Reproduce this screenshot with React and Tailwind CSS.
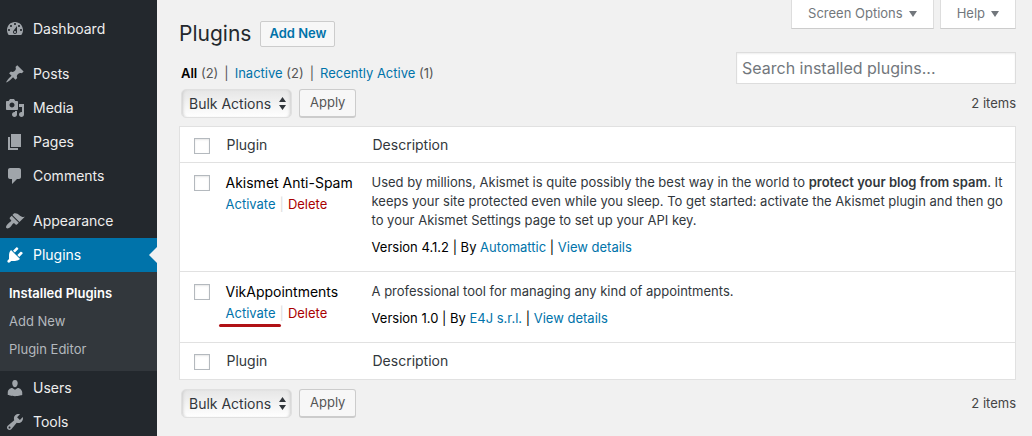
import React, { useState } from "react";
import clsx from "clsx";

const ICONS = {
  dashboard:
    "M3.76 16h12.48c1.1-1.37 1.76-3.11 1.76-5 0-4.42-3.58-8-8-8s-8 3.58-8 8c0 1.89.66 3.63 1.76 5zM10 4c.55 0 1 .45 1 1s-.45 1-1 1-1-.45-1-1 .45-1 1-1zM6 6c.55 0 1 .45 1 1s-.45 1-1 1-1-.45-1-1 .45-1 1-1zm8 0c.55 0 1 .45 1 1s-.45 1-1 1-1-.45-1-1 .45-1 1-1zm-5.37 5.55L12 7v6c0 1.1-.9 2-2 2s-2-.9-2-2c0-.57.24-1.08.63-1.45zM4 10c.55 0 1 .45 1 1s-.45 1-1 1-1-.45-1-1 .45-1 1-1zm12 0c.55 0 1 .45 1 1s-.45 1-1 1-1-.45-1-1 .45-1 1-1zm-5 3c0-.55-.45-1-1-1s-1 .45-1 1 .45 1 1 1 1-.45 1-1z",
  posts:
    "M10.44 3.02l1.82-1.82 6.36 6.35-1.83 1.82c-1.05-.68-2.48-.57-3.41.36l-.75.75c-.92.93-1.04 2.35-.35 3.41l-1.83 1.82-2.41-2.41-2.8 2.79c-.42.42-3.38 2.71-3.8 2.29s1.86-3.39 2.28-3.81l2.79-2.79L4.1 9.36l1.83-1.82c1.05.69 2.48.57 3.4-.36l.75-.75c.93-.92 1.05-2.35.36-3.41z",
  media:
    "M13 11V4c0-.55-.45-1-1-1h-1.67L9 1H5L3.67 3H2c-.55 0-1 .45-1 1v7c0 .55.45 1 1 1h10c.55 0 1-.45 1-1zM7 4.5c1.38 0 2.5 1.12 2.5 2.5S8.38 9.5 7 9.5 4.5 8.38 4.5 7 5.62 4.5 7 4.5zM14 6h5v10.5c0 1.38-1.12 2.5-2.5 2.5S14 17.88 14 16.5s1.12-2.5 2.5-2.5c.17 0 .34.02.5.05V9h-3V6zm-4 8.05V13h2v3.5c0 1.38-1.12 2.5-2.5 2.5S7 17.88 7 16.5 8.12 14 9.5 14c.17 0 .34.02.5.05z",
  pages: "M6 15V2h10v13H6zm-1 1h8v2H3V5h2v11z",
  comments:
    "M5 2h9c1.1 0 2 .9 2 2v7c0 1.1-.9 2-2 2h-2l-5 5v-5H5c-1.1 0-2-.9-2-2V4c0-1.1.9-2 2-2z",
  appearance:
    "M14.48 11.06L7.41 3.99l1.5-1.5c.5-.56 2.3-.47 3.51.32 1.21.8 1.43 1.28 2.91 2.1 1.18.64 2.45 1.26 4.45.85zm-.71.71L6.7 4.7 4.93 6.47c-.39.39-.39 1.02 0 1.41l1.06 1.06c.39.39.39 1.03 0 1.42-.6.6-1.43 1.11-2.21 1.69-.35.26-.7.53-1.01.84C1.43 14.23.4 16.08 1.4 17.07c.99 1 2.84-.03 4.18-1.36.31-.31.58-.66.85-1.02.57-.78 1.08-1.61 1.69-2.21.39-.39 1.02-.39 1.41 0l1.06 1.06c.39.39 1.02.39 1.41 0z",
  plugins:
    "M13.11 4.36L9.87 7.6 8 5.73l3.24-3.24c.35-.34 1.05-.2 1.56.32.52.51.66 1.21.31 1.55zm-8 1.77l.91-1.12 9.01 9.01-1.19.84c-.71.71-2.63 1.16-3.82 1.16H6.14L4.9 17.26c-.59.59-1.54.59-2.12 0-.59-.58-.59-1.53 0-2.12l1.24-1.24v-3.88c0-1.13.4-3.19 1.09-3.89zm7.26 3.97l3.24-3.24c.34-.35 1.04-.21 1.55.31.52.51.66 1.21.31 1.55l-3.24 3.25z",
  users:
    "M10 9.25c-2.27 0-2.73-3.44-2.73-3.44C7 4.02 7.82 2 9.97 2c2.16 0 2.98 2.02 2.71 3.81 0 0-.41 3.44-2.68 3.44zm0 2.57L12.72 10c2.39 0 4.52 2.33 4.52 4.53v2.49s-3.65 1.13-7.24 1.13c-3.65 0-7.24-1.13-7.24-1.13v-2.49c0-2.25 1.94-4.48 4.47-4.48z",
  tools:
    "M16.68 9.77c-1.34 1.34-3.3 1.67-4.95.99l-5.41 6.52c-.99.99-2.59.99-3.58 0s-.99-2.59 0-3.57l6.52-5.42c-.68-1.65-.35-3.61.99-4.95 1.28-1.28 3.12-1.62 4.72-1.06l-2.89 2.89 2.82 2.82 2.86-2.87c.53 1.58.18 3.39-1.08 4.65zM3.81 16.21c.4.39 1.04.39 1.43 0 .4-.4.4-1.04 0-1.43-.39-.4-1.03-.4-1.43 0-.39.39-.39 1.03 0 1.43z",
};

const MenuItem = ({ icon, label, active }) => (
  <a
    href="#"
    className={clsx(
      "relative flex h-[34px] items-center gap-2 pl-[5px] text-sm",
      active ? "bg-[#0073aa] text-white" : "text-[#eee]"
    )}
  >
    <svg
      viewBox="0 0 20 20"
      className={clsx("size-5", active ? "fill-white" : "fill-[#a0a5aa]")}
      aria-hidden="true"
    >
      <path d={ICONS[icon]} fillRule="evenodd" />
    </svg>
    {label}
    {active && (
      <span className="absolute top-1/2 right-0 -translate-y-1/2 border-y-8 border-r-8 border-y-transparent border-r-[#f1f1f1]" />
    )}
  </a>
);

const Sidebar = () => (
  <nav className="w-[157px] shrink-0 bg-[#23282d] pt-3">
    <MenuItem icon="dashboard" label="Dashboard" />
    <div className="mt-[11px]">
      <MenuItem icon="posts" label="Posts" />
      <MenuItem icon="media" label="Media" />
      <MenuItem icon="pages" label="Pages" />
      <MenuItem icon="comments" label="Comments" />
    </div>
    <div className="mt-[11px]">
      <MenuItem icon="appearance" label="Appearance" />
      <MenuItem icon="plugins" label="Plugins" active />
      <div className="flex flex-col bg-[#32373c] pt-[7px] pb-2 pl-[9px] text-[13px] leading-7 text-[#b4b9be]">
        <a href="#" className="font-semibold text-white">
          Installed Plugins
        </a>
        <a href="#">Add New</a>
        <a href="#">Plugin Editor</a>
      </div>
      <MenuItem icon="users" label="Users" />
      <MenuItem icon="tools" label="Tools" />
    </div>
  </nav>
);

const MetaTab = ({ label }) => (
  <button className="flex h-[29px] items-center gap-[6px] border border-t-0 border-[#ddd] border-b-[#ccc] bg-white px-4 text-[13px] text-[#72777c]">
    {label}
    <svg viewBox="0 0 8 6" className="h-[6px] w-2 fill-current" aria-hidden="true">
      <path d="M0 0h8L4 6z" />
    </svg>
  </button>
);

const BulkActions = () => (
  <div className="flex items-center justify-between pl-[2px]">
    <div className="flex gap-[7px]">
      <div className="relative">
        <select
          aria-label="Select bulk action"
          className="h-[29px] w-[111px] appearance-none rounded-[5px] border border-[#e0e0e0] bg-linear-to-b from-[#e6e6e6] to-white pl-[7px] text-sm text-[#32373c] shadow-[inset_3px_0_3px_-2px_#ccc,inset_-3px_0_3px_-2px_#ccc]"
        >
          <option>Bulk Actions</option>
          <option>Activate</option>
          <option>Delete</option>
        </select>
        <svg
          viewBox="0 0 7 13"
          className="pointer-events-none absolute top-2 right-[6px] h-[13px] w-[7px] fill-[#32373c]"
          aria-hidden="true"
        >
          <path d="M3.500 0L7 5H0zM3.500 13L0 8h7z" />
        </svg>
      </div>
      <button className="h-[29px] rounded-[3px] border border-b-2 border-[#ccc] bg-[#f7f7f7] px-[10px] text-[13px] text-[#555]">
        Apply
      </button>
    </div>
    <span className="text-[13px] text-[#444]">2 items</span>
  </div>
);

const Checkbox = ({ label }) => (
  <input
    type="checkbox"
    aria-label={label}
    className="block size-4 appearance-none border border-[#b4b9be] bg-white shadow-[inset_0_1px_2px_rgba(0,0,0,0.1)] checked:bg-[#0073aa]"
  />
);

const HeadRow = ({ label }) => (
  <tr className="text-left text-sm text-[#32373c]">
    <td className="pt-[2px] pl-[14px]">
      <Checkbox label={label} />
    </td>
    <th className="pl-[10px] font-normal">Plugin</th>
    <th className="pl-[10px] font-normal">Description</th>
  </tr>
);

const Link = ({ children }) => (
  <a href="#" className="text-[#0073aa]">
    {children}
  </a>
);

const PluginRow = ({ name, version, author, marked, children }) => (
  <tr className="border-t border-[#e1e1e1] align-top">
    <td className="pt-3 pl-[14px]">
      <Checkbox label={`Select ${name}`} />
    </td>
    <td className="pt-[10px] pl-[9px]">
      <div className="text-sm leading-5 text-black">{name}</div>
      <div className="relative flex h-6 items-center text-[13px]">
        <Link>Activate</Link>
        <span className="px-1 text-[#ddd]">|</span>
        <a href="#" className="text-[#a00]">
          Delete
        </a>
        {marked && (
          <span className="absolute top-[22px] -left-[7px] h-[3px] w-[62px] rounded-full bg-[#b01116]" />
        )}
      </div>
    </td>
    <td className="pt-[10px] pr-2 pb-[14px] pl-[9px] text-[13px] leading-[19px]">
      <p className="text-[#32373c]">{children}</p>
      <p className="mt-2 text-black">
        Version {version} | By <Link>{author}</Link> | <Link>View details</Link>
      </p>
    </td>
  </tr>
);

const App = () => {
  const [search, setSearch] = useState("");

  return (
    <div className="flex h-screen overflow-hidden bg-[#f1f1f1] font-['Inter',sans-serif]">
      <Sidebar />
      <main className="min-w-0 flex-1 pr-4 pl-[22px]">
        <div className="flex justify-between">
          <div className="pt-[21px]">
            <div className="flex h-[26px] items-center gap-[9px]">
              <h1 className="text-[21px] text-[#23282d]">Plugins</h1>
              <button className="h-[26px] rounded-[2px] border border-[#ccc] bg-[#f7f7f7] px-2 text-[13px] font-semibold text-[#0073aa]">
                Add New
              </button>
            </div>
            <div className="mt-4 flex gap-[6px] pl-[2px] text-[13px] leading-5 text-[#555]">
              <span>
                <a href="#" className="font-semibold text-black">
                  All
                </a>{" "}
                (2)
              </span>
              <span>|</span>
              <span>
                <Link>Inactive</Link> (2)
              </span>
              <span>|</span>
              <span>
                <Link>Recently Active</Link> (1)
              </span>
            </div>
          </div>
          <div className="flex flex-col items-end gap-[23px]">
            <div className="flex gap-[6px]">
              <MetaTab label="Screen Options" />
              <MetaTab label="Help" />
            </div>
            <input
              type="search"
              aria-label="Search installed plugins"
              placeholder="Search installed plugins..."
              value={search}
              onChange={(e) => setSearch(e.target.value)}
              className="h-8 w-[280px] border border-[#ddd] bg-white px-[5px] text-base text-[#32373c] shadow-[inset_0_1px_2px_rgba(0,0,0,0.07)] placeholder:text-[#72777c]"
            />
          </div>
        </div>

        <div className="mt-[5px]">
          <BulkActions />
        </div>

        <table className="mt-2 mb-[9px] w-full table-fixed border-collapse border border-[#e1e1e1] bg-white">
          <colgroup>
            <col className="w-[37px]" />
            <col className="w-[146px]" />
            <col />
          </colgroup>
          <thead className="h-9">
            <HeadRow label="Select all" />
          </thead>
          <tbody>
            <PluginRow name="Akismet Anti-Spam" version="4.1.2" author="Automattic">
              Used by millions, Akismet is quite possibly the best way in the world to{" "}
              <strong className="font-semibold">protect your blog from spam</strong>. It keeps your
              site protected even while you sleep. To get started: activate the Akismet plugin and
              then go to your Akismet Settings page to set up your API key.
            </PluginRow>
            <PluginRow name="VikAppointments" version="1.0" author="E4J s.r.l." marked>
              A professional tool for managing any kind of appointments.
            </PluginRow>
          </tbody>
          <tfoot className="h-[37px] border-t border-[#e1e1e1]">
            <HeadRow label="Select all plugins" />
          </tfoot>
        </table>

        <BulkActions />
      </main>
    </div>
  );
};

export default App;
